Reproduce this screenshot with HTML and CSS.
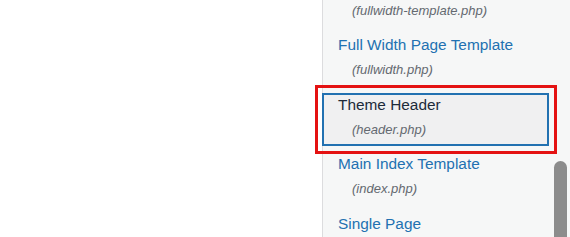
FILE: index.html
```html
<!DOCTYPE html>
<html lang="en">
<head>
  <meta charset="UTF-8">
  <title>Theme Files</title>
  <link rel="stylesheet" href="styles.css">
</head>
<body>
  <div class="page">
    <div class="editor-area"></div>

    <div class="file-sidebar">
      <ul class="file-list">
        <li class="file-item">
          <a class="file-name" href="#">Full Width Template</a>
          <span class="file-path">(fullwidth-template.php)</span>
        </li>
        <li class="file-item">
          <a class="file-name" href="#">Full Width Page Template</a>
          <span class="file-path">(fullwidth.php)</span>
        </li>
        <li class="file-item current">
          <span class="file-name">Theme Header</span>
          <span class="file-path">(header.php)</span>
          <span class="callout"></span>
        </li>
        <li class="file-item">
          <a class="file-name" href="#">Main Index Template</a>
          <span class="file-path">(index.php)</span>
        </li>
        <li class="file-item">
          <a class="file-name" href="#">Single Page</a>
        </li>
      </ul>
      <div class="scroll-thumb"></div>
    </div>
  </div>
</body>
</html>
```

FILE: styles.css
```css
html, body {
  margin: 0;
  padding: 0;
  height: 100%;
  background: #fff;
  font-family: 'Liberation Sans', Arial, sans-serif;
}

.page {
  display: flex;
  height: 100vh;
  overflow: hidden;
}

.editor-area {
  flex: 1;
  background: #fff;
}

.file-sidebar {
  position: relative;
  width: 247px;
  background: #f6f7f7;
  border-left: 1px solid #dcdcde;
}

.file-list {
  list-style: none;
  margin: -26.3px 21px 0 -1px;
  padding: 0;
}

.file-item {
  position: relative;
  display: flex;
  flex-direction: column;
  height: 53px;
  box-sizing: border-box;
  padding: 1px 0 5px 14px;
  margin-bottom: 6.5px;
  border: 2px solid transparent;
}

.file-name {
  font-size: 15.4px;
  line-height: 18px;
  color: #2271b1;
  text-decoration: none;
}

.file-path {
  margin-top: 7px;
  padding-left: 14px;
  font-size: 13px;
  line-height: 18px;
  font-style: italic;
  color: #646970;
}

.file-item.current {
  background: #f0f0f1;
  border-color: #2271b1;
}

.file-item.current .file-name {
  color: #1d2b3a;
}

/* red annotation frame drawn over the selected file */
.callout {
  position: absolute;
  top: -9.5px;
  left: -9px;
  right: -10px;
  bottom: -10px;
  border: 3px solid #e41212;
}

.scroll-thumb {
  position: absolute;
  top: 161px;
  right: 3px;
  width: 13px;
  height: 76px;
  border-radius: 7px 7px 0 0;
  background: #8c8c8c;
}
```
